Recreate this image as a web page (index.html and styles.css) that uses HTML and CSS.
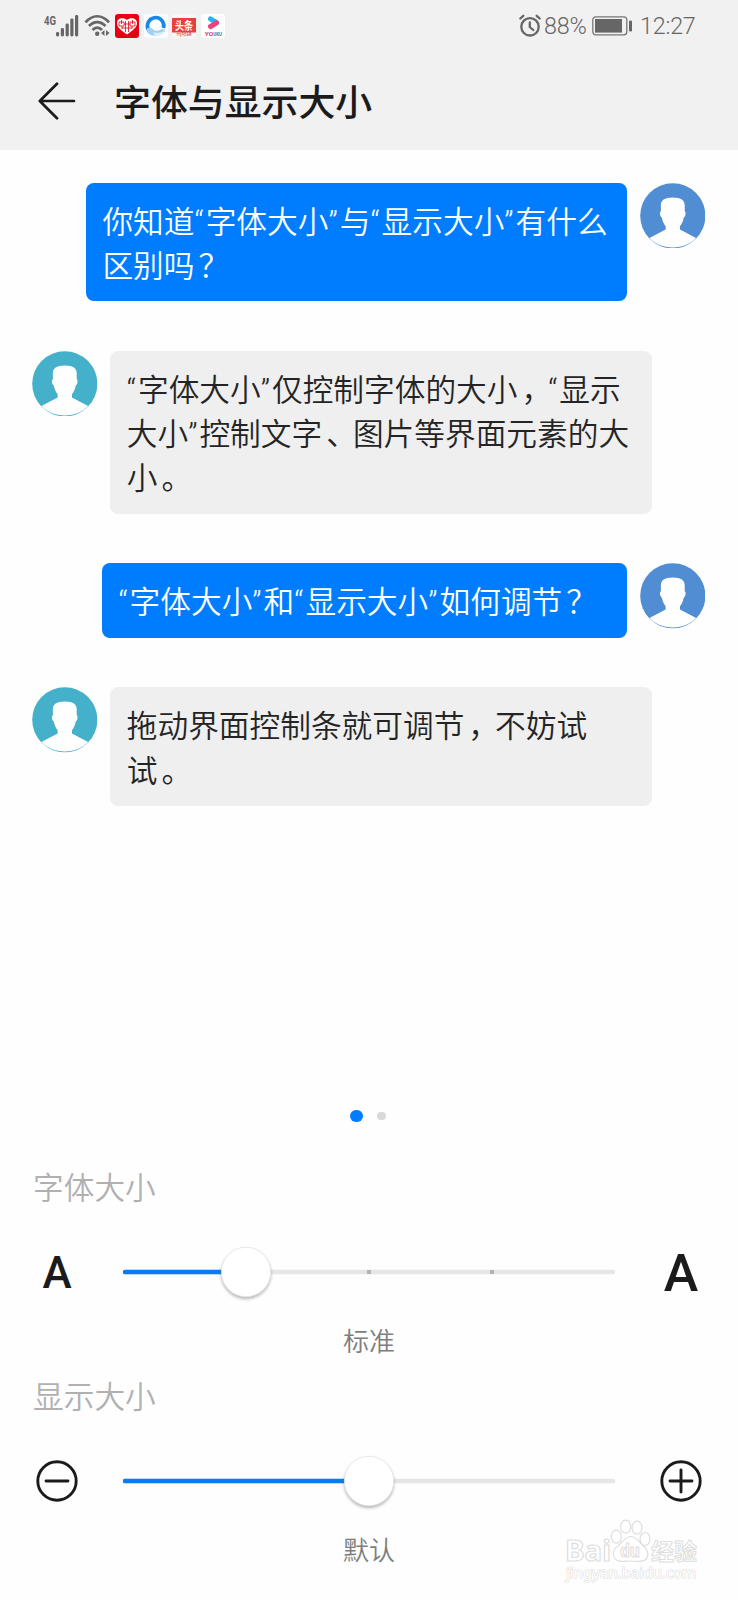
FILE: index.html
```html
<!DOCTYPE html>
<html lang="zh-CN">
<head>
<meta charset="utf-8">
<title>字体与显示大小</title>
<link rel="stylesheet" href="styles.css">
</head>
<body>
<svg width="0" height="0" class="defs">
  <symbol id="person" viewBox="0 0 66 66">
    <circle cx="33" cy="33" r="32.8" fill="currentColor"/>
    <path fill="#fff" d="M33 14.6c-8.6 0-12 3-12 7.6v6.3c-1.6.6-1 5.5 1 6.4.7 4 2.300 6.600 3.800 8.600v3.200L9.500 55.400C15 61.400 23.500 64.900 33 64.900s18-3.500 23.500-9.500L40.200 46.700v-3.200c1.500-2 3.100-4.600 3.800-8.600 2-.9 2.600-5.800 1-6.400V22.200c0-4.600-3.400-7.600-12-7.600z"/>
  </symbol>
</svg>
<header class="top">
  <div class="status">
    <svg class="signal" width="36" height="26" viewBox="0 0 36 26">
      <text x="0" y="11.500" class="net" textLength="12" lengthAdjust="spacingAndGlyphs">4G</text>
      <g fill="#666"><rect x="12" y="19" width="3.200" height="4.500" rx="1.400"/><rect x="16.800" y="15" width="3.200" height="8.500" rx="1.400"/><rect x="21.600" y="10.500" width="3.200" height="13" rx="1.400"/><rect x="26.300" y="5.500" width="3.200" height="18" rx="1.400"/><rect x="31" y="2" width="3.200" height="21.500" rx="1.400"/></g>
    </svg>
    <svg class="wifi" width="27" height="26" viewBox="0 0 27 26">
      <g fill="none" stroke="#666" stroke-width="2.700"><path d="M1.500 9.300C8.500 1.200 18 1.200 25 9.300"/><path d="M5 13c5-5.300 11.500-5.300 16.500 0"/><path d="M8.500 17c3-3.200 6.500-3.200 9.500 0"/></g>
      <circle cx="13.200" cy="20.700" r="2.200" fill="#666"/><path fill="#666" d="M17 20l3.500-3v6zM25.500 20l-3.500-3v6z"/>
    </svg>
    <svg class="app" width="24" height="24" viewBox="0 0 24 24">
      <rect width="24" height="24" rx="3" fill="#e60012"/>
      <path fill="#fff" d="M12 6C9 3 2 3.500 2 9c0 5 5.500 8 10 11.500C16.500 17 22 14 22 9c0-5.500-7-6-10-3z"/>
      <path fill="none" stroke="#e60012" stroke-width=".8" d="M4 8h5v4H4zM10.500 7v11M13.500 7v11M15 8h5v4h-5zM7 14h10M9 10h6M6.500 6v4M17.500 6v4M7 15v-3M17 15v-3"/>
    </svg>
    <svg class="app" width="24" height="24" viewBox="0 0 24 24">
      <rect width="24" height="24" rx="3" fill="#fafdff"/>
      <path d="M4.700 16.200A8.200 8.200 0 1 1 19.500 14" fill="none" stroke="#1687e8" stroke-width="3.600"/>
      <path fill="#9fd0f4" d="M2.500 16c1-3 4-3 5.500-1.500 2 2.500 5 3 8 1.500 2-1.500 4.500-1 5 1-2 4-6 5-10 4.500-4 0-8-1.500-8.500-5.500z"/><path fill="#dceffb" d="M9 18c4 2 9 0 12-1-2 4-6 5-10 4.500z"/>
    </svg>
    <svg class="app" width="24" height="24" viewBox="0 0 24 24">
      <rect width="24" height="24" rx="3" fill="#fbf7f6"/><rect y="4" width="24" height="14.500" fill="#e8403f"/>
      <text x="3" y="16" class="news" textLength="18" lengthAdjust="spacingAndGlyphs">头条</text>
      <text x="4.500" y="22.300" class="news-sub" textLength="15" lengthAdjust="spacingAndGlyphs">TTQ今日头条</text>
    </svg>
    <svg class="app" width="24" height="24" viewBox="0 0 24 24">
      <rect width="24" height="24" rx="3" fill="#fff"/>
      <g fill="none" stroke-width="5" stroke-linecap="round"><path stroke="#27b3f2" d="M9.500 4.800l6 3.800"/><path stroke="#ef4278" d="M9.500 12.500l6-3.700"/></g>
      <text x="3.800" y="21.800" class="youku" textLength="8.500" lengthAdjust="spacingAndGlyphs" fill="#da3b78">YO</text><text x="12.300" y="21.800" class="youku" textLength="8.500" lengthAdjust="spacingAndGlyphs" fill="#3976a8">UKU</text>
    </svg>
    <svg class="alarm" width="22" height="24" viewBox="0 0 22 24">
      <g fill="none" stroke="#666" stroke-width="2.300" stroke-linecap="round"><circle cx="11" cy="12.800" r="8.700"/><path d="M10.800 8.500v4.500l3.500 3M1.300 4.500l3-2.700M20.700 4.500l-3-2.700"/></g>
    </svg>
    <span class="percent">88%</span>
    <svg class="battery" width="41" height="20" viewBox="0 0 41 20">
      <rect x=".8" y=".8" width="34" height="18" rx="3" fill="none" stroke="#777" stroke-width="1.300"/><rect x="3" y="3" width="27" height="13.600" fill="#666"/><rect x="37" y="4.500" width="3" height="11" rx="1.200" fill="#666"/>
    </svg>
    <span class="time">12:27</span>
  </div>
  <div class="titlebar">
    <svg width="38" height="38" viewBox="0 0 38 38"><path d="M36 19H1.800M19 1.800L1.800 19L19 36.200" fill="none" stroke="#1b1b1b" stroke-width="2.700" stroke-linecap="round" stroke-linejoin="round"/></svg>
    <h1>字体与显示大小</h1>
  </div>
</header>
<main>
  <section class="chat">
    <div class="row me"><p class="bubble wide">你知道<span class="q">“</span>字体大小<span class="q">”</span>与<span class="q">“</span>显示大小<span class="q">”</span>有什么<br>区别吗<span class="mark">？</span></p><svg class="avatar"><use href="#person"/></svg></div>
    <div class="row"><svg class="avatar"><use href="#person"/></svg><p class="bubble wide"><span class="q">“</span>字体大小<span class="q">”</span>仅控制字体的大小<span class="mark">，</span><span class="q">“</span>显示<br>大小<span class="q">”</span>控制文字<span class="mark">、</span>图片等界面元素的大<br>小<span class="mark">。</span></p></div>
    <div class="row me"><p class="bubble fit"><span class="q">“</span>字体大小<span class="q">”</span>和<span class="q">“</span>显示大小<span class="q">”</span>如何调节<span class="mark">？</span></p><svg class="avatar"><use href="#person"/></svg></div>
    <div class="row"><svg class="avatar"><use href="#person"/></svg><p class="bubble wide">拖动界面控制条就可调节<span class="mark">，</span>不妨试<br>试<span class="mark">。</span></p></div>
  </section>
  <div class="pager"><i class="on"></i><i></i></div>
  <section class="setting">
    <h2>字体大小</h2>
    <div class="control">
      <span class="end small">A</span>
      <svg class="slider" width="544" height="64" viewBox="0 0 544 64">
        <rect x="26" y="29.800" width="492" height="4.400" rx="1.500" fill="#e6e6e6"/><rect x="26" y="29.800" width="123" height="4.400" rx="1.500" fill="#0a7af5"/>
        <path fill="#b3b3b3" d="M270 30h4v4h-4zM393 30h4v4h-4z"/>
        <circle class="thumb" cx="149" cy="32" r="24.700"/>
      </svg>
      <span class="end big">A</span>
    </div>
    <p class="value">标准</p>
  </section>
  <section class="setting">
    <h2>显示大小</h2>
    <div class="control">
      <span class="end"><svg width="42" height="42" viewBox="0 0 42 42" class="zoom"><circle cx="21" cy="21" r="19.200"/><path d="M10 21h22"/></svg></span>
      <svg class="slider" width="544" height="64" viewBox="0 0 544 64">
        <rect x="26" y="29.800" width="492" height="4.400" rx="1.500" fill="#e6e6e6"/><rect x="26" y="29.800" width="246" height="4.400" rx="1.500" fill="#0a7af5"/>
        <circle class="thumb" cx="272" cy="32" r="24.700"/>
      </svg>
      <span class="end"><svg width="42" height="42" viewBox="0 0 42 42" class="zoom"><circle cx="21" cy="21" r="19.200"/><path d="M10 21h22M21 10v22"/></svg></span>
    </div>
    <p class="value">默认</p>
  </section>
</main>
<svg class="watermark" width="140" height="70" viewBox="0 0 140 70">
  <g fill="#fff" stroke="#dedede" stroke-width="1.200">
    <text x="5" y="42" class="wm-main" textLength="46" lengthAdjust="spacingAndGlyphs">Bai</text>
    <text x="91" y="41" class="wm-cjk" textLength="46" lengthAdjust="spacingAndGlyphs">经验</text>
    <ellipse cx="56.300" cy="17.700" rx="5" ry="6.500"/><ellipse cx="65.700" cy="7.700" rx="5" ry="6.500"/><ellipse cx="77" cy="8.700" rx="5" ry="6.500"/><ellipse cx="85" cy="20" rx="5" ry="6.500"/>
    <path d="M70.500 17.500c-5 0-7 5-11.500 8.500-5.500 4-7 9-4.500 13 3.500 5 10 3 16 3s12 2 15.500-2c3.500-4 2-9.500-3-13.500-4.500-4-7-9-12.500-9z"/>
    <text x="60" y="38" class="wm-du" textLength="20" lengthAdjust="spacingAndGlyphs">du</text>
  </g>
  <text x="6" y="59" class="wm-url" textLength="130" lengthAdjust="spacingAndGlyphs">jingyan.baidu.com</text>
</svg>
</body>
</html>
```

FILE: styles.css
```css
* { box-sizing: border-box; }
body {
  margin: 0;
  width: 738px;
  height: 1600px;
  position: relative;
  overflow: hidden;
  background: #fefefe;
  color: #242424;
  font-family: Roboto, "Noto Sans CJK SC", sans-serif;
}
h1, h2, p { margin: 0; font-weight: 350; }
.defs { position: absolute; }
.top { height: 150px; background: #f1f1f1; }
.status { height: 52px; padding: 13px 40px 0 44px; display: flex; align-items: flex-start; color: #666; }
.status svg { flex: none; overflow: visible; }
.net { font: 700 12px Roboto, sans-serif; fill: #666; }
.wifi { margin-left: 4px; }
.app { margin: 1px 0 0 4.700px; }
.wifi + .app { margin-left: 4px; }
.news { font: 700 11px "Noto Sans CJK SC", sans-serif; fill: #fff; }
.news-sub { font: 700 4px "Noto Sans CJK SC", sans-serif; fill: #d8504d; }
.youku { font: 700 5px Roboto, sans-serif; }
.alarm { margin-left: auto; margin-top: 1px; }
.percent, .time { font-size: 23.300px; line-height: 26px; font-weight: 350; letter-spacing: -.2px; }
.percent { width: 43px; margin-left: 3.500px; }
.battery { margin: 3px 0 0 5px; }
.time { width: 58px; margin-left: 7px; }
.titlebar { height: 98px; display: flex; align-items: center; gap: 38px; padding: 0 0 0 38px; }
.titlebar svg { margin-top: -1px; }
.titlebar h1 { padding-top: 6px; font-size: 36.900px; line-height: 50px; font-weight: 500; color: #1b1b1b; }
.chat { height: 951px; padding: 32.500px 32.700px 0 32.400px; display: flex; flex-direction: column; gap: 49.300px; }
.row { display: flex; align-items: flex-start; gap: 12.300px; color: #45b0ca; }
.me { justify-content: flex-end; color: #508dd2; }
.avatar { width: 65.600px; height: 65.600px; flex: none; }
.bubble {
  padding: 18px 16.500px 12.400px;
  border-radius: 8px;
  background: #efefef;
  color: #242424;
  font-size: 30.700px;
  line-height: 44.300px;
  white-space: nowrap;
}
.wide { width: 541.500px; }
.fit { width: 525.500px; }
.me .bubble { background: #007dff; color: #fff; }
.q { letter-spacing: 2px; }
.mark { padding-left: 4px; margin-right: -4px; }
.pager { height: 30px; padding-right: 2px; display: flex; align-items: center; justify-content: center; gap: 14.500px; }
.pager i { width: 8.400px; height: 8.400px; border-radius: 50%; background: #d9d9d9; }
.pager .on { width: 12.500px; height: 12.500px; background: #007dff; }
.setting { height: 209.300px; padding-top: 36px; }
.setting h2 { padding-left: 33px; font-size: 30.700px; line-height: 44px; color: #b0b0b0; }
.control { height: 64px; margin-top: 28.500px; display: flex; }
.slider { flex: none; }
.end { width: 97px; display: flex; align-items: center; justify-content: center; color: #1b1b1b; font-weight: 500; }
.end:first-child { padding-left: 17px; }
.end:last-child { padding-right: 17px; }
.small { font-size: 44px; padding-top: 3px; }
.big { font-size: 52px; padding-top: 4px; }
.thumb { fill: #fff; stroke: #e4e4e4; stroke-width: .8; filter: drop-shadow(0 2px 1.500px rgba(0, 0, 0, .28)); }
.zoom { fill: none; stroke: #1b1b1b; stroke-width: 2.900; stroke-linecap: round; }
.value { margin-top: 19.500px; font-size: 26px; line-height: 38px; text-align: center; color: #7d7d7d; }
.watermark { position: absolute; left: 560px; top: 1519px; }
.wm-main { font: 700 29px "Noto Sans", sans-serif; }
.wm-cjk { font: 700 23px "Noto Sans CJK SC", sans-serif; stroke-width: 1; }
.wm-du { font: 700 18px "Noto Sans", sans-serif; }
.wm-url { font: 400 15px "Noto Sans", sans-serif; fill: #fff; stroke: #dedede; stroke-width: 1.200; paint-order: stroke; }
```
